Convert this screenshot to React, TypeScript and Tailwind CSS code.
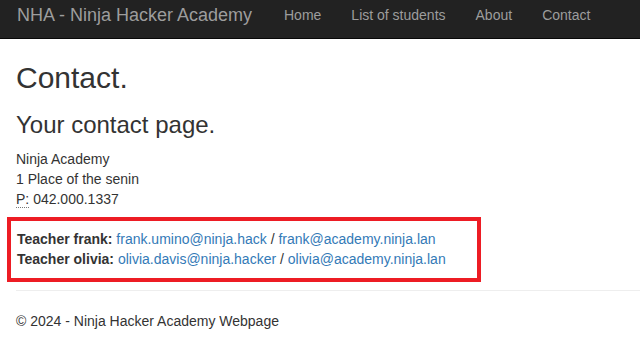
const navLinks = ['Home', 'List of students', 'About', 'Contact'];

const teachers = [
  { name: 'frank', mails: ['frank.umino@ninja.hack', 'frank@academy.ninja.lan'] },
  { name: 'olivia', mails: ['olivia.davis@ninja.hacker', 'olivia@academy.ninja.lan'] },
];

export default function App() {
  return (
    <div className="min-h-[341px] bg-white font-['Liberation_Sans',Arial,sans-serif] text-[14px] leading-[20px] text-[#333]">
      {/* Top navbar */}
      <nav className="flex h-[39px] items-start border-b border-[#080808] bg-[#222] pt-[5px]">
        <a href="#" className="w-[269px] pl-[17px] text-[18px] leading-[20px] text-[#9d9d9d]">
          NHA - Ninja Hacker Academy
        </a>
        <ul className="flex">
          {navLinks.map((label) => (
            <li key={label}>
              <a href="#" className="block px-[15px] leading-[20px] text-[#9d9d9d]">
                {label}
              </a>
            </li>
          ))}
        </ul>
      </nav>

      <div className="pl-[16px]">
        <h2 className="mt-[22px] mb-0 text-[30px] leading-[33px] font-normal">Contact.</h2>
        <h3 className="mt-[18px] mb-[11px] text-[24px] leading-[26px] font-normal">Your contact page.</h3>

        <address className="mb-[8px] not-italic">
          Ninja Academy
          <br />
          1 Place of the senin
          <br />
          <abbr title="Phone" className="cursor-help border-b border-dotted border-[#777] no-underline">
            P:
          </abbr>{' '}
          042.000.1337
        </address>

        {/* Highlighted teacher contacts */}
        <div className="ml-[-9px] w-[474px] border-4 border-[#ed1c24] pt-[8px] pb-[9px] pl-[6px]">
          {teachers.map((t) => (
            <div key={t.name}>
              <strong className="font-bold">Teacher {t.name}:</strong>{' '}
              <a href="#" className="text-[#337ab7]">{t.mails[0]}</a>
              {' / '}
              <a href="#" className="text-[#337ab7]">{t.mails[1]}</a>
            </div>
          ))}
        </div>

        <hr className="mt-[8px] border-t border-[#eee]" />
        <footer className="pt-[20px]">
          <p>© 2024 - Ninja Hacker Academy Webpage</p>
        </footer>
      </div>
    </div>
  );
}
